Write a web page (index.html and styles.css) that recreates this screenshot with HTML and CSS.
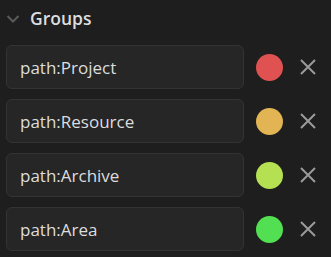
FILE: index.html
```html
<!DOCTYPE html>
<html lang="en">
<head>
    <meta charset="UTF-8">
    <meta name="viewport" content="width=device-width, initial-scale=1.0">
    <title>Groups</title>
    <link rel="stylesheet" href="styles.css">
</head>
<body>
    <div class="panel">
        <div class="panel-header">
            <svg class="chevron" width="14" height="10" viewBox="0 0 14 10">
                <path d="M1.5 2 L7 7.5 L12.5 2" fill="none" stroke="#5a5a5a" stroke-width="2"/>
            </svg>
            <span class="title">Groups</span>
        </div>
        <div class="groups">
            <div class="group">
                <input class="query" type="text" value="path:Project">
                <span class="swatch" style="background: #e05252"></span>
                <button class="remove"><svg width="18" height="18" viewBox="0 0 18 18"><path d="M2 2 L16 16 M16 2 L2 16" stroke="#9a9a9a" stroke-width="2"/></svg></button>
            </div>
            <div class="group">
                <input class="query" type="text" value="path:Resource">
                <span class="swatch" style="background: #e2b453"></span>
                <button class="remove"><svg width="18" height="18" viewBox="0 0 18 18"><path d="M2 2 L16 16 M16 2 L2 16" stroke="#9a9a9a" stroke-width="2"/></svg></button>
            </div>
            <div class="group">
                <input class="query" type="text" value="path:Archive">
                <span class="swatch" style="background: #b4e052"></span>
                <button class="remove"><svg width="18" height="18" viewBox="0 0 18 18"><path d="M2 2 L16 16 M16 2 L2 16" stroke="#9a9a9a" stroke-width="2"/></svg></button>
            </div>
            <div class="group">
                <input class="query" type="text" value="path:Area">
                <span class="swatch" style="background: #52e052"></span>
                <button class="remove"><svg width="18" height="18" viewBox="0 0 18 18"><path d="M2 2 L16 16 M16 2 L2 16" stroke="#9a9a9a" stroke-width="2"/></svg></button>
            </div>
        </div>
    </div>
</body>
</html>
```

FILE: styles.css
```css
body {
    margin: 0;
    background: #1e1e1e;
    font-family: 'Open Sans', 'Noto Sans', sans-serif;
    color: #dcddde;
}

.panel {
    padding: 0 6px;
}

.panel-header {
    display: flex;
    align-items: center;
    height: 36px;
}

.chevron {
    margin-right: 10px;
    margin-top: 1px;
}

.title {
    font-size: 17.5px;
    font-weight: 600;
    color: #dcddde;
}

.groups {
    display: flex;
    flex-direction: column;
    gap: 10px;
    margin-top: 9px;
}

.group {
    display: flex;
    align-items: center;
    height: 44px;
}

.query {
    box-sizing: border-box;
    width: 238px;
    height: 44px;
    padding: 0 13px;
    background: #262626;
    border: 1px solid #333;
    border-radius: 6px;
    font-family: inherit;
    font-size: 17px;
    color: #dcddde;
    outline: none;
}

.swatch {
    width: 27px;
    height: 27px;
    border-radius: 50%;
    margin-left: 12px;
}

.remove {
    display: flex;
    padding: 0;
    margin-left: 16px;
    background: none;
    border: none;
    cursor: pointer;
}
```
